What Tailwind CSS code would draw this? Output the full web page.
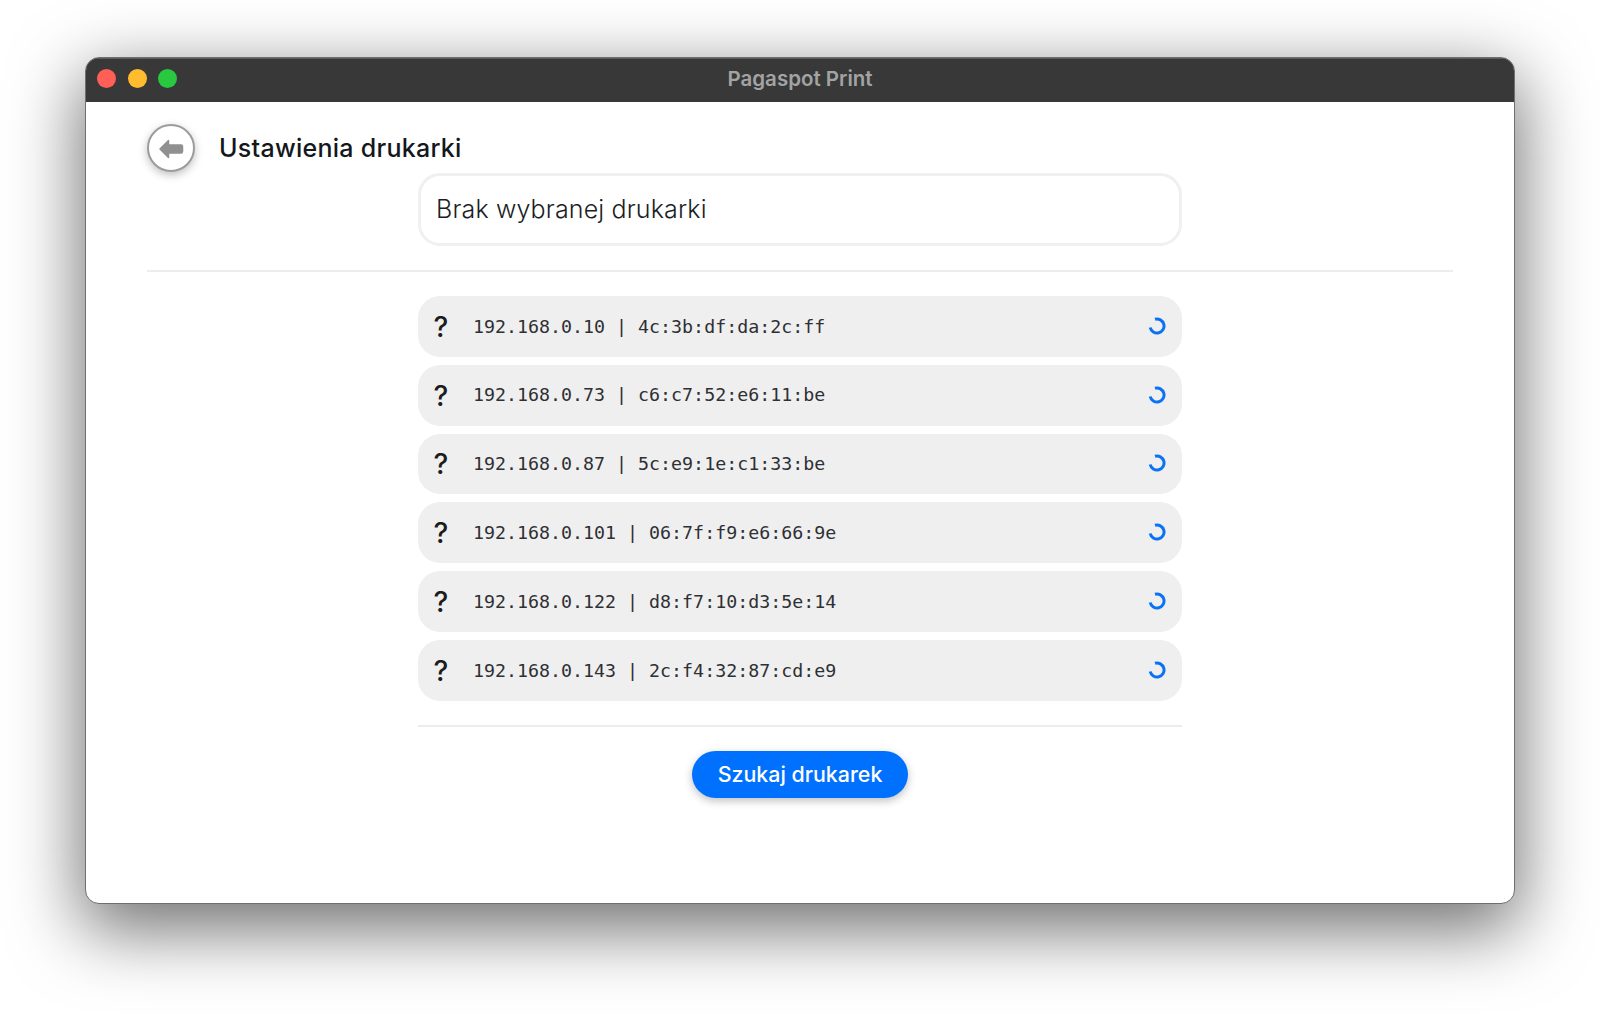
<!DOCTYPE html>
<html lang="pl">

<head>
  <meta charset="UTF-8">
  <title>Pagaspot Print</title>
  <script src="https://cdn.jsdelivr.net/npm/@tailwindcss/browser@4"></script>
</head>

<body class="w-[1600px] h-[1016px] overflow-hidden bg-white pt-[57px] pl-[85px] font-['Inter',sans-serif]">
  <div class="w-[1430px] h-[847px] rounded-[14px] overflow-hidden bg-white border border-[#6f6f6f] shadow-[0_22px_70px_4px_rgba(0,0,0,0.56)]">

    <!-- pasek tytulu -->
    <div class="relative h-[44px] bg-[#383838] border-t border-[#5c5c5c] flex items-center justify-center pb-[2px]">
      <div class="absolute left-[11px] top-[10px] flex gap-[11.5px]">
        <span class="w-[19px] h-[19px] rounded-full bg-[#ff5f57]"></span>
        <span class="w-[19px] h-[19px] rounded-full bg-[#febc2e]"></span>
        <span class="w-[19px] h-[19px] rounded-full bg-[#28c840]"></span>
      </div>
      <span class="text-[#a3a3a3] text-[20.5px] font-semibold">Pagaspot Print</span>
    </div>

    <div class="px-[61px] pt-[22px]">
      <div class="flex items-center gap-[24px] h-[48px]">
        <button class="w-[48px] h-[48px] rounded-full bg-white border-2 border-[#9c9c9c] shadow-[0_3px_8px_rgba(0,0,0,0.25)] flex items-center justify-center">
          <svg class="mt-[1px]" width="26" height="22" viewBox="0 0 26 22">
            <path d="M2 11 L10.500 2.500 L10.500 7 L23 7 Q24.500 7 24.500 8.500 L24.500 13.500 Q24.500 15 23 15 L10.500 15 L10.500 19.500 Z" fill="#909090" stroke="#909090" stroke-width="1.500" stroke-linejoin="round" />
          </svg>
        </button>
        <h1 class="text-[25px] font-medium text-[#14171c] tracking-[0.28px] pt-[1px]">Ustawienia drukarki</h1>
      </div>

      <div class="w-[764px] h-[73px] mt-[1px] mx-auto rounded-[22px] border-[3px] border-[#f0f0f0] flex items-center pl-[15px] pt-[1px] text-[25px] tracking-[0.15px] font-light text-[#1b1e24]">
        Brak wybranej drukarki
      </div>

      <div class="h-[2px] mt-[24px] bg-[#ededed]"></div>

      <div class="w-[764px] mx-auto mt-[24px]">
        <div class="flex flex-col gap-[8px]">
          <div class="h-[60.8px] rounded-[22px] bg-[#efefef] flex items-center pl-[14px] pr-[16px]">
            <span class="w-[18px] text-center text-[28px] font-medium text-[#1c1c1e] pt-[1px]">?</span>
            <span class="ml-[23px] text-[18.3px] text-[#2e3034] slashed-zero font-['DejaVu_Sans_Mono',monospace]">192.168.0.10 | 4c:3b:df:da:2c:ff</span>
            <svg class="ml-auto mb-[1px]" width="18" height="18" viewBox="0 0 18 18"><path d="M7 2.300 A7 7 0 1 1 2.200 10.500" fill="none" stroke="#0a72f5" stroke-width="3" /></svg>
          </div>
          <div class="h-[60.8px] rounded-[22px] bg-[#efefef] flex items-center pl-[14px] pr-[16px]">
            <span class="w-[18px] text-center text-[28px] font-medium text-[#1c1c1e] pt-[1px]">?</span>
            <span class="ml-[23px] text-[18.3px] text-[#2e3034] slashed-zero font-['DejaVu_Sans_Mono',monospace]">192.168.0.73 | c6:c7:52:e6:11:be</span>
            <svg class="ml-auto mb-[1px]" width="18" height="18" viewBox="0 0 18 18"><path d="M7 2.300 A7 7 0 1 1 2.200 10.500" fill="none" stroke="#0a72f5" stroke-width="3" /></svg>
          </div>
          <div class="h-[60.8px] rounded-[22px] bg-[#efefef] flex items-center pl-[14px] pr-[16px]">
            <span class="w-[18px] text-center text-[28px] font-medium text-[#1c1c1e] pt-[1px]">?</span>
            <span class="ml-[23px] text-[18.3px] text-[#2e3034] slashed-zero font-['DejaVu_Sans_Mono',monospace]">192.168.0.87 | 5c:e9:1e:c1:33:be</span>
            <svg class="ml-auto mb-[1px]" width="18" height="18" viewBox="0 0 18 18"><path d="M7 2.300 A7 7 0 1 1 2.200 10.500" fill="none" stroke="#0a72f5" stroke-width="3" /></svg>
          </div>
          <div class="h-[60.8px] rounded-[22px] bg-[#efefef] flex items-center pl-[14px] pr-[16px]">
            <span class="w-[18px] text-center text-[28px] font-medium text-[#1c1c1e] pt-[1px]">?</span>
            <span class="ml-[23px] text-[18.3px] text-[#2e3034] slashed-zero font-['DejaVu_Sans_Mono',monospace]">192.168.0.101 | 06:7f:f9:e6:66:9e</span>
            <svg class="ml-auto mb-[1px]" width="18" height="18" viewBox="0 0 18 18"><path d="M7 2.300 A7 7 0 1 1 2.200 10.500" fill="none" stroke="#0a72f5" stroke-width="3" /></svg>
          </div>
          <div class="h-[60.8px] rounded-[22px] bg-[#efefef] flex items-center pl-[14px] pr-[16px]">
            <span class="w-[18px] text-center text-[28px] font-medium text-[#1c1c1e] pt-[1px]">?</span>
            <span class="ml-[23px] text-[18.3px] text-[#2e3034] slashed-zero font-['DejaVu_Sans_Mono',monospace]">192.168.0.122 | d8:f7:10:d3:5e:14</span>
            <svg class="ml-auto mb-[1px]" width="18" height="18" viewBox="0 0 18 18"><path d="M7 2.300 A7 7 0 1 1 2.200 10.500" fill="none" stroke="#0a72f5" stroke-width="3" /></svg>
          </div>
          <div class="h-[60.8px] rounded-[22px] bg-[#efefef] flex items-center pl-[14px] pr-[16px]">
            <span class="w-[18px] text-center text-[28px] font-medium text-[#1c1c1e] pt-[1px]">?</span>
            <span class="ml-[23px] text-[18.3px] text-[#2e3034] slashed-zero font-['DejaVu_Sans_Mono',monospace]">192.168.0.143 | 2c:f4:32:87:cd:e9</span>
            <svg class="ml-auto mb-[1px]" width="18" height="18" viewBox="0 0 18 18"><path d="M7 2.300 A7 7 0 1 1 2.200 10.500" fill="none" stroke="#0a72f5" stroke-width="3" /></svg>
          </div>
        </div>

        <div class="h-[2px] mt-[24px] bg-[#ededed]"></div>

        <div class="flex justify-center mt-[24px]">
          <button class="w-[216px] h-[47px] rounded-full bg-[#0071ff] text-white text-[21.4px] font-medium shadow-[0_3px_8px_rgba(0,0,0,0.25)]">Szukaj drukarek</button>
        </div>
      </div>
    </div>
  </div>
</body>

</html>
